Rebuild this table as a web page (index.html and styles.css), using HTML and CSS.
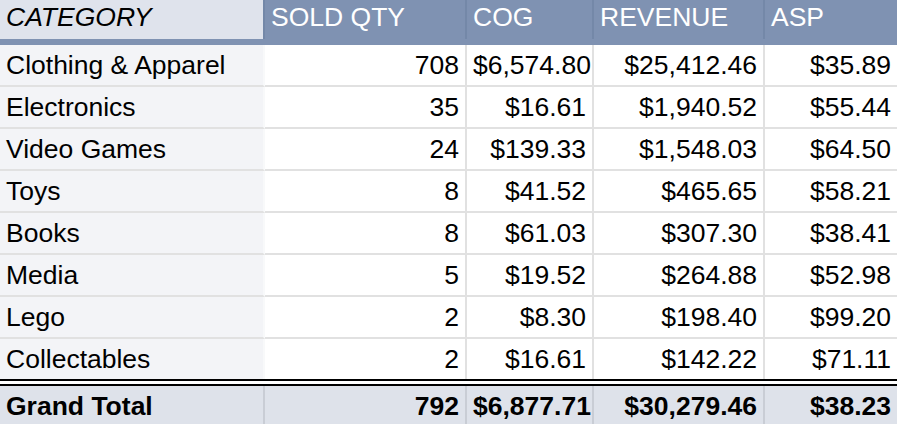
FILE: index.html
```html
<!DOCTYPE html>
<html>
<head>
<meta charset="utf-8">
<link rel="stylesheet" href="styles.css">
</head>
<body>
<div class="sheet">
  <div class="row head">
    <div class="cell cat">CATEGORY</div>
    <div class="cell">SOLD QTY</div>
    <div class="cell">COG</div>
    <div class="cell">REVENUE</div>
    <div class="cell">ASP</div>
  </div>
  <div class="row data">
    <div class="cell cat">Clothing &amp; Apparel</div>
    <div class="cell">708</div>
    <div class="cell">$6,574.80</div>
    <div class="cell">$25,412.46</div>
    <div class="cell">$35.89</div>
  </div>
  <div class="row data">
    <div class="cell cat">Electronics</div>
    <div class="cell">35</div>
    <div class="cell">$16.61</div>
    <div class="cell">$1,940.52</div>
    <div class="cell">$55.44</div>
  </div>
  <div class="row data">
    <div class="cell cat">Video Games</div>
    <div class="cell">24</div>
    <div class="cell">$139.33</div>
    <div class="cell">$1,548.03</div>
    <div class="cell">$64.50</div>
  </div>
  <div class="row data">
    <div class="cell cat">Toys</div>
    <div class="cell">8</div>
    <div class="cell">$41.52</div>
    <div class="cell">$465.65</div>
    <div class="cell">$58.21</div>
  </div>
  <div class="row data">
    <div class="cell cat">Books</div>
    <div class="cell">8</div>
    <div class="cell">$61.03</div>
    <div class="cell">$307.30</div>
    <div class="cell">$38.41</div>
  </div>
  <div class="row data">
    <div class="cell cat">Media</div>
    <div class="cell">5</div>
    <div class="cell">$19.52</div>
    <div class="cell">$264.88</div>
    <div class="cell">$52.98</div>
  </div>
  <div class="row data">
    <div class="cell cat">Lego</div>
    <div class="cell">2</div>
    <div class="cell">$8.30</div>
    <div class="cell">$198.40</div>
    <div class="cell">$99.20</div>
  </div>
  <div class="row data last">
    <div class="cell cat">Collectables</div>
    <div class="cell">2</div>
    <div class="cell">$16.61</div>
    <div class="cell">$142.22</div>
    <div class="cell">$71.11</div>
  </div>
  <div class="row total">
    <div class="cell cat">Grand Total</div>
    <div class="cell">792</div>
    <div class="cell">$6,877.71</div>
    <div class="cell">$30,279.46</div>
    <div class="cell">$38.23</div>
  </div>
</div>
</body>
</html>
```
FILE: styles.css
```css
html, body {
  margin: 0;
  padding: 0;
  background: #ffffff;
}

.sheet {
  width: 897px;
  font-family: "Liberation Sans", Arial, sans-serif;
  font-size: 26.5px;
  color: #000;
}

.row {
  display: grid;
  grid-template-columns: 265px 202px 127px 171px 132px;
}

.cell {
  box-sizing: border-box;
  padding: 0 6px;
  white-space: nowrap;
  overflow: hidden;
  border-right: 2px solid #e1e1e1;
}

.cell:last-child {
  border-right: none;
}

/* header */
.head {
  border-bottom: 6px solid #7f92b2;
}

.head .cell {
  height: 39px;
  line-height: 35px;
  padding-bottom: 4px;
  background: #7f92b2;
  color: #ffffff;
  border-right-color: #7488a8;
}

.head .cat {
  background: #dfe3ec;
  color: #000;
  font-style: italic;
}

/* data rows */
.data .cell {
  height: 42px;
  line-height: 40px;
  text-align: right;
  background: #ffffff;
  border-bottom: 2px solid #e1e1e1;
}

.data .cat {
  text-align: left;
  background: #f3f4f7;
  border-right-color: #f8f9fa;
}

.data.last .cell {
  height: 40px;
  border-bottom: none;
}

/* grand total */
.total {
  border-top: 7px double #000;
}

.total .cell {
  height: 40px;
  line-height: 40px;
  text-align: right;
  font-weight: bold;
  background: #dee2ea;
  border-right-color: #c9cdd5;
}

.total .cat {
  text-align: left;
}
```
